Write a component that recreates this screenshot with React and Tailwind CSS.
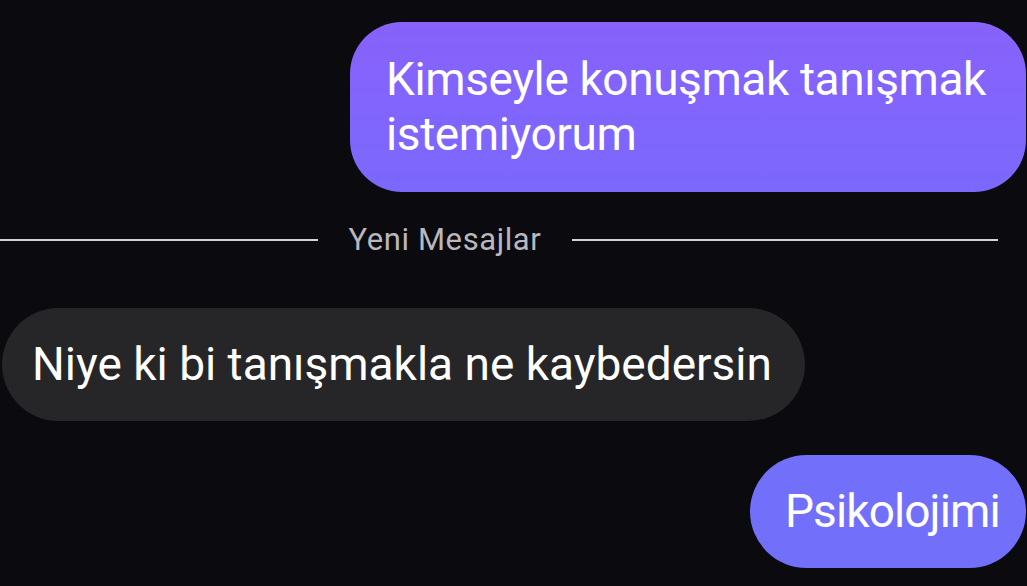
export default function App() {
  return (
    <div className="flex h-[586px] w-[1027px] flex-col overflow-hidden bg-[#0a0a0f] font-['Roboto',sans-serif] text-white">
      <div className="mt-[22px] flex justify-end pr-[1px]">
        <div className="flex h-[170px] w-[676px] flex-col justify-center rounded-[52px] bg-gradient-to-b from-[#8762fb] to-[#7b68fd] pl-[36px] text-[46px] leading-[55px] tracking-[-0.4px]">
          <span>Kimseyle konuşmak tanışmak</span>
          <span>istemiyorum</span>
        </div>
      </div>

      <div className="mt-[30px] flex h-[36px] items-center">
        <div className="h-[2px] w-[318px] bg-[#d2d2d6]" />
        <span className="w-[254px] text-center text-[31px] leading-[36px] tracking-[0.6px] text-[#b8b8bd]">Yeni Mesajlar</span>
        <div className="h-[2px] w-[426px] bg-[#d2d2d6]" />
      </div>

      <div className="mt-[50px] flex pl-[2px]">
        <div className="flex h-[113px] w-[803px] items-center rounded-full bg-[#262629] pl-[30px] text-[46px]">
          Niye ki bi tanışmakla ne kaybedersin
        </div>
      </div>

      <div className="mt-[34px] flex justify-end pr-[1px]">
        <div className="flex h-[113px] w-[276px] items-center rounded-full bg-[#7270fb] pl-[35px] text-[46px] tracking-[-0.9px]">
          Psikolojimi
        </div>
      </div>
    </div>
  )
}
